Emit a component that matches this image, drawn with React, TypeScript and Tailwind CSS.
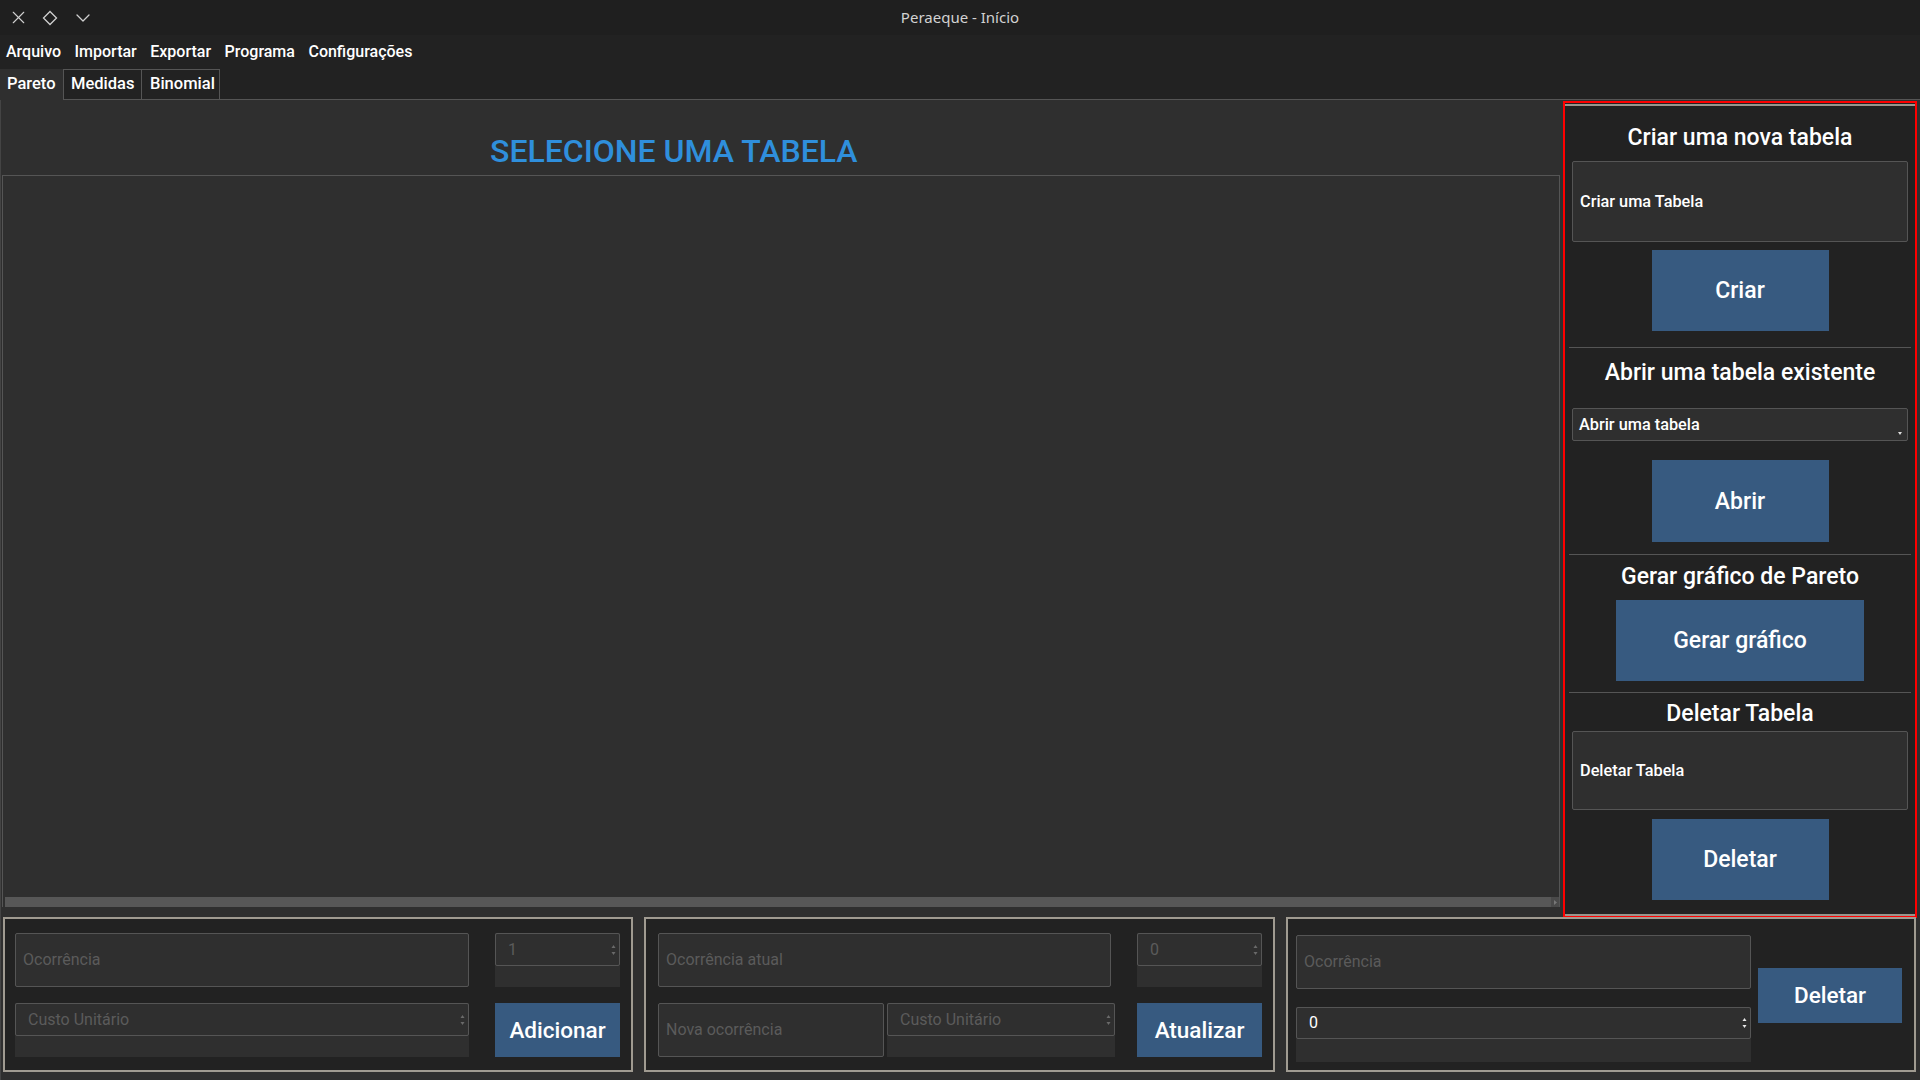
import { X, ChevronDown } from 'lucide-react'

function SpinArrows({ light }: { light?: boolean }) {
  const c = light ? '#e8e8e8' : '#6a6a6a'
  return (
    <svg width="5" height="12" viewBox="0 0 5 12" className="shrink-0">
      <path d="M2.5 1 L4.5 4 L0.5 4 Z" fill={c} />
      <path d="M2.5 11 L4.5 8 L0.5 8 Z" fill={c} />
    </svg>
  )
}

function TextBox({ placeholder, className = '' }: { placeholder: string; className?: string }) {
  return (
    <div className={`flex items-center pl-[7px] bg-[#2f2f2f] border border-[#555] rounded-[2px] text-[16px] text-[#5b5b5b] ${className}`}>
      {placeholder}
    </div>
  )
}

function Spin({ text, light, top, className = '' }: { text: string; light?: boolean; top: string; className?: string }) {
  return (
    <div className={`flex flex-col bg-[#2f2f2f] ${className}`}>
      <div className={`${top} flex items-center justify-between pl-[12px] pr-[3px] border border-[#555] rounded-[2px] text-[16px] ${light ? 'text-white' : 'text-[#5b5b5b]'}`}>
        <span>{text}</span>
        <SpinArrows light={light} />
      </div>
    </div>
  )
}

function BlueButton({ label, className = '' }: { label: string; className?: string }) {
  return (
    <div className={`flex items-center justify-center bg-[#375a80] text-white font-medium ${className}`}>
      {label}
    </div>
  )
}

function Section({ title, mt }: { title: string; mt: string }) {
  return <div className={`${mt} h-[28px] leading-[28px] text-center text-[23px] font-medium text-white`}>{title}</div>
}

export default function App() {
  const menus = ['Arquivo', 'Importar', 'Exportar', 'Programa', 'Configurações']

  return (
    <div className="w-[1920px] h-[1080px] flex flex-col bg-[#2f2f2f] font-[Roboto,sans-serif] overflow-hidden select-none">
      {/* barra de título */}
      <div className="h-[35px] shrink-0 bg-[#1f1f1f] grid grid-cols-[1fr_auto_1fr] items-center">
        <div className="flex items-center gap-[13px] pl-[8px] text-[#d0d0d0]">
          <X size={21} strokeWidth={1.3} />
          <svg width="16" height="16" viewBox="0 0 16 16">
            <path d="M8 1.5 L14.5 8 L8 14.5 L1.5 8 Z" fill="none" stroke="#d0d0d0" strokeWidth="1.3" />
          </svg>
          <ChevronDown size={24} strokeWidth={1.3} />
        </div>
        <div className="font-['Noto_Sans',sans-serif] text-[15px] text-[#d2d2d2]">Peraeque - Início</div>
        <div />
      </div>

      {/* menu */}
      <div className="h-[33px] shrink-0 bg-[#222] flex items-center gap-[13.5px] pl-[6px] text-[16px] font-medium text-white">
        {menus.map(m => <span key={m}>{m}</span>)}
      </div>

      {/* abas */}
      <div className="h-[32px] shrink-0 bg-[#222] flex items-end text-[16.5px] font-medium text-white">
        <div className="h-[31px] w-[64px] bg-[#2f2f2f] border-r border-[#555] flex items-center pl-[7px]">Pareto</div>
        <div className="h-[31px] w-[78px] border-t border-r border-b border-[#555] flex items-center pl-[7px]">Medidas</div>
        <div className="h-[31px] w-[78px] border-t border-r border-b border-[#555] flex items-center pl-[8px]">Binomial</div>
        <div className="flex-1 border-b border-[#555]" />
      </div>

      {/* corpo */}
      <div className="flex-1 flex flex-col border-l border-[#444]">
        <div className="h-[817px] flex shrink-0">
          {/* painel da tabela */}
          <div className="w-[1559px] flex flex-col">
            <div className="h-[75px] flex items-end pl-[489px] pb-[5px] leading-[38px] text-[32px] font-medium text-[#2f8fdc]">
              SELECIONE UMA TABELA
            </div>
            <div className="h-[732px] ml-[1px] border-t border-r border-l border-[#555] flex flex-col justify-end">
              <div className="h-[10px] ml-[2px] bg-[#575757] flex justify-end">
                <div className="w-[8px] h-[10px] bg-[#4a4a4a] flex items-center justify-center">
                  <svg width="3" height="5" viewBox="0 0 3 5"><path d="M0 0 L3 2.5 L0 5 Z" fill="#777" /></svg>
                </div>
              </div>
            </div>
          </div>

          {/* painel lateral */}
          <div className="ml-[3px] mt-[1px] w-[354px] h-[817px] border-2 border-[#ff0000] bg-[#222] flex flex-col">
            <div className="mt-[1px] h-[2px] bg-[#9a958c]" />
            <Section title="Criar uma nova tabela" mt="mt-[18px]" />
            <div className="mt-[9px] mx-[7px] h-[81px] bg-[#2f2f2f] border border-[#555] rounded-[2px] flex items-center pl-[7px] pt-[2px] text-[16.3px] font-medium text-white">
              Criar uma Tabela
            </div>
            <BlueButton label="Criar" className="mt-[8px] self-center w-[177px] h-[81px] pt-[2px] text-[23px]" />
            <div className="mt-[16px] mx-[4px] h-px bg-[#555]" />

            <Section title="Abrir uma tabela existente" mt="mt-[11px]" />
            <div className="mt-[21px] mx-[7px] h-[33px] bg-[#2f2f2f] border border-[#555] rounded-[2px] flex items-center justify-between pl-[6px] pr-[5px] pt-[1px] text-[16.3px] font-medium text-white relative">
              <span>Abrir uma tabela</span>
              <svg width="4" height="3" viewBox="0 0 4 3" className="absolute right-[5px] bottom-[5px]"><path d="M0 0 L4 0 L2 3 Z" fill="#ddd" /></svg>
            </div>
            <BlueButton label="Abrir" className="mt-[19px] self-center w-[177px] h-[82px] pt-[2px] text-[23px]" />
            <div className="mt-[12px] mx-[4px] h-px bg-[#555]" />

            <Section title="Gerar gráfico de Pareto" mt="mt-[8px]" />
            <BlueButton label="Gerar gráfico" className="mt-[9px] self-center w-[248px] h-[81px] pt-[2px] text-[23px]" />
            <div className="mt-[11px] mx-[4px] h-px bg-[#555]" />

            <Section title="Deletar Tabela" mt="mt-[7px]" />
            <div className="mt-[3px] mx-[7px] h-[79px] bg-[#2f2f2f] border border-[#555] rounded-[2px] flex items-center pl-[7px] pt-[2px] text-[16.3px] font-medium text-white">
              Deletar Tabela
            </div>
            <BlueButton label="Deletar" className="mt-[9px] self-center w-[177px] h-[81px] pt-[2px] text-[23px]" />
            <div className="mt-[14px] h-[2px] bg-[#9a958c]" />
          </div>
        </div>

        {/* grupos inferiores */}
        <div className="h-[155px] shrink-0 flex gap-[11px] pl-[2px]">
          <div className="w-[630px] h-[155px] border-2 border-[#a09b91] bg-[#222] pl-[10px] pt-[14px] flex gap-[26px]">
            <div className="w-[454px] flex flex-col gap-[16px]">
              <TextBox placeholder="Ocorrência" className="h-[54px]" />
              <Spin text="Custo Unitário" top="h-[33px]" className="h-[54px]" />
            </div>
            <div className="w-[125px] flex flex-col gap-[16px]">
              <Spin text="1" top="h-[33px]" className="h-[54px]" />
              <BlueButton label="Adicionar" className="h-[54px] pt-[2px] text-[22.5px]" />
            </div>
          </div>

          <div className="w-[631px] h-[155px] border-2 border-[#a09b91] bg-[#222] pl-[12px] pt-[14px] flex gap-[22px]">
            <div className="w-[457px] flex flex-col gap-[16px]">
              <TextBox placeholder="Ocorrência atual" className="h-[54px] w-[453px]" />
              <div className="flex gap-[3px]">
                <TextBox placeholder="Nova ocorrência" className="h-[54px] w-[226px]" />
                <Spin text="Custo Unitário" top="h-[33px]" className="h-[54px] w-[228px]" />
              </div>
            </div>
            <div className="w-[125px] flex flex-col gap-[16px]">
              <Spin text="0" top="h-[33px]" className="h-[54px]" />
              <BlueButton label="Atualizar" className="h-[54px] pt-[2px] text-[22.5px]" />
            </div>
          </div>

          <div className="w-[630px] h-[155px] border-2 border-[#a09b91] bg-[#222] pl-[8px] pt-[16px] flex gap-[7px]">
            <div className="w-[455px] flex flex-col gap-[18px]">
              <TextBox placeholder="Ocorrência" className="h-[54px]" />
              <Spin text="0" light top="h-[32px]" className="h-[55px]" />
            </div>
            <BlueButton label="Deletar" className="mt-[33px] w-[144px] h-[55px] text-[22.5px]" />
          </div>
        </div>
      </div>
    </div>
  )
}
